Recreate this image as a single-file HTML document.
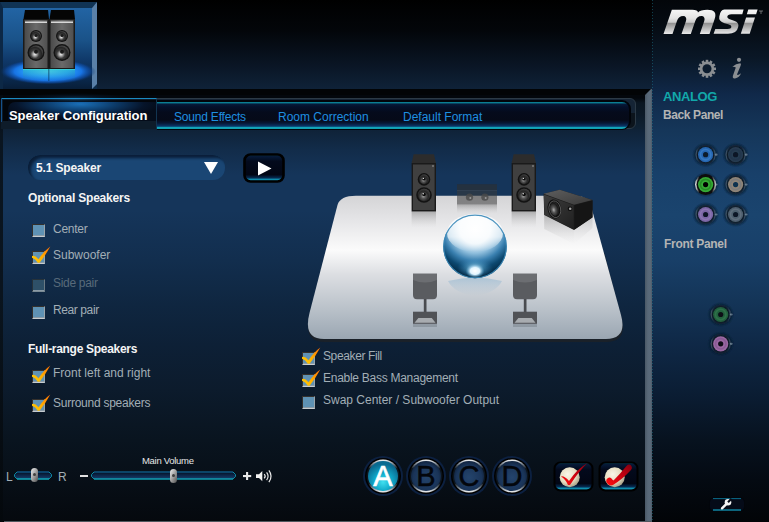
<!DOCTYPE html>
<html><head><meta charset="utf-8">
<style>
*{margin:0;padding:0;box-sizing:border-box}
html,body{width:769px;height:522px;overflow:hidden;background:#000;font-family:"Liberation Sans",sans-serif}
.a{position:absolute}
.t{position:absolute;white-space:nowrap;line-height:1}
#hdr{left:0;top:0;width:652px;height:89px;background:linear-gradient(#000 0%,#03060a 35%,#0a1626 75%,#0f2238 100%)}
#bar{left:0;top:89px;width:651px;height:6px;background:#020406}
#panel{left:3px;top:95px;width:642px;height:426px;background:linear-gradient(#03070c 0px,#03070c 3px,#0a1622 8px,#0c1a28 20px,#0f2234 34px,#0f2238 35px,#122c4a 55px,#15355a 80px,#15355a 115px,#122e4e 165px,#0f2640 210px,#0d2036 250px,#0c1b2c 295px,#09141f 345px,#070e16 390px,#05090e 426px)}
#lstrip{left:0;top:95px;width:3px;height:427px;background:linear-gradient(#050a10,#0a1520 40px,#0a141e 200px,#04080c 427px)}
#rb{left:645px;top:89px;width:7px;height:433px;background:linear-gradient(90deg,#4a5866,#586878 40%,#5a6a7a 75%,#4e5c6a)}
#bl{left:4px;top:521px;width:647px;height:1px;background:#50585f}
#side{left:652px;top:0;width:117px;height:522px;background:linear-gradient(#03060a 0px,#050b12 25px,#0a1828 60px,#10294a 95px,#153659 130px,#18406a 175px,#1a446e 215px,#183f68 260px,#143558 300px,#0f2846 345px,#0b1e35 390px,#07121f 440px,#040a12 480px,#020407 522px)}
#dots{left:652px;top:0;width:1px;height:522px;background:repeating-linear-gradient(rgba(30,130,150,0.45) 0 1px,transparent 1px 3px)}
#tabframe{left:1px;top:98px;width:635px;height:31px;border:1px solid #2c3a46;border-radius:6px;background:linear-gradient(#152435 0,#152435 50%,#0c141c 50%,#0c141c 100%)}
#tabstrip{left:157px;top:100px;width:474px;height:30px;border:2px solid #01040a;border-top-width:2px;border-bottom-width:1.5px;border-left:0;border-radius:0 9px 9px 0;background:linear-gradient(#0c8c9c 0,#0a7088 1px,#061a3a 2px,#04102a 5px,#050b1c 10px,#060a18 18px,#071634 21px,#0a3466 24px,#0c6890 25px,#12a4b8 25.5px,#10a0b4 26.5px,#0a5a80 27px)}
#acttab{left:1px;top:98px;width:156px;height:31px;background:#0e1c2a;border-top:1px solid #1a8ac0;border-left:1px solid #0e1c2a;border-right:1px solid #123450;box-shadow:inset 1px 0 0 #0e1c2a}
#acttop{left:8px;top:102px;width:148px;height:19px;border-radius:7px 0 0 0;background:radial-gradient(ellipse 80px 16px at 72px 2px,#1a70b8 0%,#0c3a68 45%,#06142a 80%,#040c1a 100%)}
#actin{left:3px;top:100px;width:153px;height:21px;border-radius:0;background:#02050a}
.tab{color:#1e8fe0;font-size:12px}
.lbl{color:#a2aeb6;font-size:12px}
.hd{color:#f4f4f4;font-size:12px;font-weight:bold}
.cb{position:absolute;width:13px;height:13px;border-top:1px solid #34302c;border-left:1px solid #34302c;border-right:1px solid #9aa4aa;border-bottom:1px solid #c6ccd0;background:#5f92b4;box-shadow:inset 0 -1px 0 #8a9aa6}
.cb.dis{background:#2e5068;border-color:#26323a #6a7a84 #7a8a94 #26323a}
</style></head><body>
<div class="a" id="hdr"></div>
<div class="a" id="bar"></div>
<div class="a" id="side"></div>
<div class="a" id="dots"></div>
<div class="a" id="lstrip"></div>
<div class="a" id="panel"></div>
<div class="a" id="tabframe"></div>
<div class="a" id="tabstrip"></div>
<div class="a" id="acttab"></div>
<div class="a" id="actin"></div>
<div class="a" id="acttop"></div>
<div class="a" style="left:1px;top:99px;width:1px;height:23px;background:#14508a"></div>
<div class="a" style="left:20px;top:93px;width:110px;height:12px;background:radial-gradient(ellipse 55px 6px at 55px 6px,rgba(40,150,230,0.3) 0%,rgba(20,90,170,0.12) 55%,rgba(10,40,80,0) 100%)"></div>
<div class="a" id="rb"></div>
<div class="a" style="left:645px;top:89px;width:0;height:0;border-top:6px solid #020406;border-right:6px solid transparent"></div>
<div class="a" id="bl"></div>

<!-- tabs text -->
<div class="t hd" style="left:9px;top:109px;font-size:13px;color:#fff;letter-spacing:-0.05px">Speaker Configuration</div>
<div class="t tab" style="left:174px;top:111px;letter-spacing:-0.2px">Sound Effects</div>
<div class="t tab" style="left:278px;top:111px">Room Correction</div>
<div class="t tab" style="left:403px;top:111px">Default Format</div>

<!-- dropdown -->
<div class="a" style="left:28px;top:155px;width:197px;height:25px;border-radius:12px;background:#1a4674;box-shadow:inset 3px 3px 3px #0a1e38"></div>
<div class="t hd" style="left:36px;top:162px;letter-spacing:-0.15px">5.1 Speaker</div>







<div class="t hd" style="left:28px;top:192px;letter-spacing:-0.2px">Optional Speakers</div>
<div class="cb" style="left:32px;top:224px"></div>
<div class="t lbl" style="left:53px;top:223px;letter-spacing:-0.25px">Center</div>
<div class="cb" style="left:32px;top:251px"></div>
<div class="t lbl" style="left:53px;top:249px">Subwoofer</div>
<div class="cb dis" style="left:32px;top:279px"></div>
<div class="t lbl" style="left:53px;top:277px;color:#586a7a;letter-spacing:-0.3px">Side pair</div>
<div class="cb" style="left:32px;top:306px"></div>
<div class="t lbl" style="left:53px;top:304px;letter-spacing:-0.4px">Rear pair</div>

<div class="t hd" style="left:28px;top:343px;letter-spacing:-0.3px">Full-range Speakers</div>
<div class="cb" style="left:32px;top:370px"></div>
<div class="t lbl" style="left:53px;top:367px">Front left and right</div>
<div class="cb" style="left:32px;top:399px"></div>
<div class="t lbl" style="left:53px;top:397px;letter-spacing:-0.25px">Surround speakers</div>

<div class="cb" style="left:302px;top:352px"></div>
<div class="t lbl" style="left:323px;top:350px;letter-spacing:-0.38px">Speaker Fill</div>
<div class="cb" style="left:302px;top:374px"></div>
<div class="t lbl" style="left:323px;top:372px;letter-spacing:-0.27px">Enable Bass Management</div>
<div class="cb" style="left:302px;top:396px"></div>
<div class="t lbl" style="left:323px;top:394px">Swap Center / Subwoofer Output</div>

<!-- bottom -->
<div class="t lbl" style="left:6px;top:471px;font-size:12px">L</div>
<div class="t lbl" style="left:58px;top:471px;font-size:12px">R</div>
<div class="t" style="left:142px;top:456px;font-size:9.5px;color:#e6e6e6;letter-spacing:-0.3px">Main Volume</div>

<!-- sidebar text -->
<div class="t" style="left:663px;top:90px;font-size:13px;font-weight:bold;color:#12a8aa;letter-spacing:-0.4px">ANALOG</div>
<div class="t" style="left:663px;top:109px;font-size:12px;font-weight:bold;color:#b4b4b4;letter-spacing:-0.4px">Back Panel</div>
<div class="t" style="left:664px;top:238px;font-size:12px;font-weight:bold;color:#b4b4b4;letter-spacing:-0.3px">Front Panel</div>
<svg class="a" style="left:0;top:0" width="769" height="522" viewBox="0 0 769 522">
<defs>
 <linearGradient id="tileg" x1="0" y1="0" x2="0" y2="1">
  <stop offset="0" stop-color="#2264a4"/><stop offset="0.4" stop-color="#1a5288"/><stop offset="0.65" stop-color="#0f3868"/><stop offset="0.85" stop-color="#0a2a50"/><stop offset="1" stop-color="#081e38"/>
 </linearGradient>
 <radialGradient id="glow" cx="0.5" cy="0.5" r="0.5">
  <stop offset="0" stop-color="#50d0ff"/><stop offset="0.4" stop-color="#2aa4ff"/><stop offset="0.7" stop-color="#1874e4"/><stop offset="0.88" stop-color="#0e4aa0" stop-opacity="0.65"/><stop offset="1" stop-color="#0a3060" stop-opacity="0"/>
 </radialGradient>
 <linearGradient id="spkb" x1="0" y1="0" x2="1" y2="0">
  <stop offset="0" stop-color="#4a4a4a"/><stop offset="0.5" stop-color="#6a6a6a"/><stop offset="1" stop-color="#505050"/>
 </linearGradient>
 <radialGradient id="drv" cx="0.45" cy="0.6" r="0.6">
  <stop offset="0" stop-color="#f0f0f0"/><stop offset="0.25" stop-color="#808080"/><stop offset="0.55" stop-color="#202020"/><stop offset="0.8" stop-color="#3a3a3a"/><stop offset="1" stop-color="#111"/>
 </radialGradient>
 <linearGradient id="floorg" x1="0" y1="0" x2="0" y2="1">
  <stop offset="0" stop-color="#d4d4d6"/><stop offset="0.18" stop-color="#e6e6e8"/><stop offset="0.38" stop-color="#fbfbfb"/><stop offset="0.55" stop-color="#dcdee2"/><stop offset="0.8" stop-color="#b8c0c8"/><stop offset="1" stop-color="#9aa6b2"/>
 </linearGradient>
 <radialGradient id="sph" cx="0.5" cy="0.22" r="0.8">
  <stop offset="0" stop-color="#ffffff"/><stop offset="0.3" stop-color="#eaf4fa"/><stop offset="0.48" stop-color="#92c0de"/><stop offset="0.63" stop-color="#3a80b0"/><stop offset="0.78" stop-color="#0c4870"/><stop offset="0.9" stop-color="#05304e"/><stop offset="1" stop-color="#021828"/>
 </radialGradient>
 <radialGradient id="sphglow" cx="0.5" cy="0.5" r="0.5">
  <stop offset="0" stop-color="#e8f8ff" stop-opacity="0.9"/><stop offset="0.5" stop-color="#6ab8e0" stop-opacity="0.4"/><stop offset="1" stop-color="#3a88c0" stop-opacity="0"/>
 </radialGradient>
 <radialGradient id="sphspot" cx="0.5" cy="0.5" r="0.5">
  <stop offset="0" stop-color="#fff"/><stop offset="0.5" stop-color="#e0f4ff"/><stop offset="1" stop-color="#4aa0d0" stop-opacity="0"/>
 </radialGradient>
 <linearGradient id="chk" x1="0" y1="1" x2="1" y2="0">
  <stop offset="0" stop-color="#ffd000"/><stop offset="0.5" stop-color="#ffa800"/><stop offset="1" stop-color="#ff6a00"/>
 </linearGradient>
 <linearGradient id="playg" x1="0" y1="0" x2="0" y2="1">
  <stop offset="0" stop-color="#0a7090"/><stop offset="0.07" stop-color="#061a38"/><stop offset="0.25" stop-color="#030a1c"/><stop offset="0.75" stop-color="#020614"/><stop offset="0.86" stop-color="#06284e"/><stop offset="0.94" stop-color="#10a0c0"/><stop offset="1" stop-color="#0a4a70"/>
 </linearGradient>
 <linearGradient id="trk" x1="0" y1="0" x2="0" y2="1">
  <stop offset="0" stop-color="#050e1e"/><stop offset="0.35" stop-color="#0a2040"/><stop offset="1" stop-color="#173e6c"/>
 </linearGradient>
 <linearGradient id="thumb" x1="0" y1="0" x2="1" y2="1">
  <stop offset="0" stop-color="#f0f0f0"/><stop offset="0.5" stop-color="#a0a0a0"/><stop offset="1" stop-color="#505050"/>
 </linearGradient>
 <radialGradient id="btnA" cx="0.5" cy="0.7" r="0.6">
  <stop offset="0" stop-color="#40e0f0"/><stop offset="0.5" stop-color="#10a8c8"/><stop offset="1" stop-color="#0a6a90"/>
 </radialGradient>
 <radialGradient id="btnB" cx="0.5" cy="0.55" r="0.6">
  <stop offset="0" stop-color="#24446c"/><stop offset="0.7" stop-color="#1a3458"/><stop offset="1" stop-color="#0c1c34"/>
 </radialGradient>
 <linearGradient id="rim" x1="0" y1="0" x2="0" y2="1">
  <stop offset="0" stop-color="#ffffff"/><stop offset="0.1" stop-color="#9aa4ae"/><stop offset="0.28" stop-color="#0c141c"/><stop offset="0.72" stop-color="#0c141c"/><stop offset="0.9" stop-color="#9aa4ae"/><stop offset="1" stop-color="#ffffff"/>
 </linearGradient>
 <radialGradient id="cream" cx="0.4" cy="0.35" r="0.7">
  <stop offset="0" stop-color="#faf6e8"/><stop offset="0.6" stop-color="#e4dcc0"/><stop offset="1" stop-color="#a09880"/>
 </radialGradient>
 <linearGradient id="redg" x1="0" y1="1" x2="1" y2="0">
  <stop offset="0" stop-color="#ff1010"/><stop offset="0.6" stop-color="#c00010"/><stop offset="1" stop-color="#800010"/>
 </linearGradient>
 <linearGradient id="msig" gradientUnits="userSpaceOnUse" x1="0" x2="0" y1="9.6" y2="33.8">
  <stop offset="0" stop-color="#f6f6f6"/><stop offset="0.35" stop-color="#e4e4e4"/><stop offset="0.53" stop-color="#cacaca"/><stop offset="0.545" stop-color="#8c8c8c"/><stop offset="0.75" stop-color="#b4b4b4"/><stop offset="1" stop-color="#e8e8e8"/>
 </linearGradient>
</defs>
<!-- tile -->
<defs>
 <radialGradient id="cone" cx="0.42" cy="0.62" r="0.6">
  <stop offset="0" stop-color="#f4f4f4"/><stop offset="0.22" stop-color="#a8a8a8"/><stop offset="0.5" stop-color="#3c3c3c"/><stop offset="0.8" stop-color="#262626"/><stop offset="1" stop-color="#4a4a4a"/>
 </radialGradient>
 <radialGradient id="cone2" cx="0.45" cy="0.6" r="0.62">
  <stop offset="0" stop-color="#a8a8a8"/><stop offset="0.28" stop-color="#5a5a5a"/><stop offset="0.65" stop-color="#262626"/><stop offset="0.9" stop-color="#3a3a3a"/><stop offset="1" stop-color="#555"/>
 </radialGradient>
 <linearGradient id="refl" x1="0" y1="0" x2="0" y2="1">
  <stop offset="0" stop-color="#40f0e0" stop-opacity="0.95"/><stop offset="0.1" stop-color="#30c0c0" stop-opacity="0.5"/><stop offset="0.5" stop-color="#2a9ab0" stop-opacity="0.3"/><stop offset="1" stop-color="#1060a0" stop-opacity="0"/>
 </linearGradient>
 <linearGradient id="sphhi" x1="0" y1="0" x2="0" y2="1">
  <stop offset="0" stop-color="#fff" stop-opacity="0.95"/><stop offset="0.6" stop-color="#fff" stop-opacity="0.8"/><stop offset="1" stop-color="#fff" stop-opacity="0"/>
 </linearGradient>
 <linearGradient id="spkrefl" x1="0" y1="0" x2="0" y2="1">
  <stop offset="0" stop-color="#707070" stop-opacity="0.45"/><stop offset="1" stop-color="#c0c0c0" stop-opacity="0"/>
 </linearGradient>
</defs>
<rect x="0" y="2" width="97" height="87" fill="#0c2a48"/>
<rect x="3" y="8" width="89" height="81" fill="url(#tileg)"/>
<polygon points="0,2 97,2 92,8 3,8" fill="#103354"/>
<polygon points="0,2 3,8 3,89 0,89" fill="#0c2846"/>
<polygon points="92,8 97,2 97,84 92,89" fill="#5a80a8"/>
<ellipse cx="48" cy="71.5" rx="48" ry="13" fill="url(#glow)"/>
<rect x="23" y="69" width="52" height="12" fill="url(#refl)"/>
<rect x="48" y="69" width="1.5" height="12" fill="#0a3a60" opacity="0.5"/>
<g id="tspk">
 <polygon points="23.5,19 25,10 48,10 49,19" fill="#050505"/>
 <rect x="23" y="19" width="26" height="50" fill="#1a1a1a"/>
 <rect x="24.5" y="20" width="23" height="48" fill="url(#spkb)"/>
 <rect x="25" y="21.5" width="22" height="1.5" fill="#d8d8d8"/>
 <circle cx="36" cy="36" r="6" fill="#141414"/>
 <circle cx="36" cy="36" r="4.8" fill="url(#cone)"/>
 <circle cx="36" cy="35.5" r="1.6" fill="#1a1a1a"/>
 <circle cx="36" cy="52.5" r="8.5" fill="#141414"/>
 <circle cx="36" cy="52.5" r="7" fill="url(#cone)"/>
 <circle cx="36" cy="51.8" r="2" fill="#1a1a1a"/>
</g>
<use href="#tspk" x="26"/>

<!-- dropdown triangle & play -->
<polygon points="204,162 218,162 211,174" fill="#fff"/>
<rect x="244.5" y="154.5" width="39" height="27" rx="6" fill="url(#playg)" stroke="#000" stroke-width="2.6"/>
<polygon points="258,161.5 271.5,168.5 258,175.5" fill="#fff"/>

<!-- floor -->
<path transform="translate(0.3,3)" d="M356,250 L604,250 L621,315 Q627.5,339 606,339 L324,339 Q302.8,339 309.5,313 L325,250 Z" fill="#1a2129"/>
<path d="M356,195.7 L576,195.7 Q588.1,195.7 591,206 L621,315 Q627.5,339 606,339 L324,339 Q302.8,339 309.5,313 L337.5,205 Q340.1,195.7 356,195.7 Z" fill="url(#floorg)"/>
<!-- front speakers -->
<g id="fspk">
 <rect x="411.6" y="211.5" width="24.4" height="16" fill="url(#spkrefl)"/>
 <polygon points="411.6,163 413.6,154.3 434,154.3 436,163" fill="#2c2c2c"/>
 <rect x="411.6" y="163" width="24.4" height="48.5" fill="#1a1a1a"/>
 <rect x="413" y="164.5" width="21.6" height="45.5" fill="#404040"/>
 <circle cx="433" cy="166" r="0.7" fill="#bbb"/>
 <circle cx="424" cy="179.4" r="6.3" fill="#121212"/>
 <circle cx="424" cy="179.4" r="4.8" fill="url(#cone2)"/>
 <circle cx="424" cy="179" r="1.6" fill="#0a0a0a"/>
 <circle cx="423.4" cy="178.4" r="0.7" fill="#ddd"/>
 <circle cx="424" cy="195" r="7.8" fill="#121212"/>
 <circle cx="424" cy="195" r="6.2" fill="url(#cone2)"/>
 <circle cx="424" cy="194.5" r="1.8" fill="#0a0a0a"/>
 <circle cx="423.2" cy="193.8" r="0.8" fill="#ddd"/>
</g>
<use href="#fspk" x="100"/>
<!-- center -->
<rect x="457" y="204.5" width="40" height="9" fill="url(#spkrefl)"/>
<rect x="457" y="184.2" width="40" height="20.3" fill="#3a3a3a" opacity="0.55"/>
<rect x="457" y="184.2" width="40" height="5.8" fill="#000" opacity="0.12"/>
<rect x="457" y="190" width="40" height="0.8" fill="#4a5a6a" opacity="0.35"/>
<circle cx="469.5" cy="197.2" r="3.6" fill="#4a4a4a" opacity="0.8"/><circle cx="484.9" cy="197.2" r="3.6" fill="#4a4a4a" opacity="0.8"/>
<circle cx="470.3" cy="198" r="1" fill="#aaa" opacity="0.8"/><circle cx="485.7" cy="198" r="1" fill="#aaa" opacity="0.8"/>
<!-- subwoofer -->
<defs>
 <linearGradient id="subrefl" x1="0" y1="0" x2="0" y2="1"><stop offset="0" stop-color="#8a8a8a" stop-opacity="0.5"/><stop offset="1" stop-color="#d0d0d0" stop-opacity="0"/></linearGradient>
 <linearGradient id="subtop" x1="0" y1="0" x2="1" y2="1"><stop offset="0" stop-color="#5e5e5e"/><stop offset="1" stop-color="#3a3a3a"/></linearGradient>
 <linearGradient id="subfr" x1="0" y1="0" x2="1" y2="1"><stop offset="0" stop-color="#3e3e3e"/><stop offset="1" stop-color="#202020"/></linearGradient>
 <radialGradient id="wcone" cx="0.4" cy="0.55" r="0.6"><stop offset="0" stop-color="#b0b0b0"/><stop offset="0.35" stop-color="#555"/><stop offset="0.8" stop-color="#1a1a1a"/><stop offset="1" stop-color="#2a2a2a"/></radialGradient>
</defs>
<polygon points="544.2,215 574,230 574,244 544.2,229" fill="url(#subrefl)"/>
<polygon points="574,230 592.5,217.4 592.5,228 574,244" fill="url(#subrefl)" opacity="0.6"/>
<polygon points="543.6,193.8 559.7,189.8 592.5,200.1 592.5,217.4 574,230 544.2,215" fill="#1c1c1c"/>
<polygon points="543.6,193.8 559.7,189.8 592.5,200.1 574,204.7" fill="url(#subtop)"/>
<polygon points="543.8,194.6 573.6,205.3 573.6,229.2 544.4,214.6" fill="url(#subfr)"/>
<polygon points="574.4,205.3 592.5,200.6 592.5,217.2 574.4,229.4" fill="#151515"/>
<ellipse cx="554.5" cy="209" rx="6.8" ry="9.6" fill="#0e0e0e" transform="rotate(-12 554.5 209)"/>
<ellipse cx="554.8" cy="209.3" rx="5.8" ry="8.4" fill="none" stroke="#8a8a8a" stroke-width="0.8" opacity="0.7" transform="rotate(-12 554.5 209)"/>
<ellipse cx="554.5" cy="209" rx="4.6" ry="7" fill="url(#wcone)" transform="rotate(-12 554.5 209)"/>
<circle cx="570" cy="208.7" r="2.3" fill="#0c0c0c"/><circle cx="570.2" cy="208.8" r="1.3" fill="#a0a0a0"/>
<!-- sphere -->
<defs><linearGradient id="sphrefl" x1="0" y1="0" x2="0" y2="1"><stop offset="0" stop-color="#4a90c0" stop-opacity="0.45"/><stop offset="1" stop-color="#8ab8d8" stop-opacity="0"/></linearGradient></defs>
<path d="M448,281 Q475,274 502,281 Q496,293 475,296 Q454,293 448,281 Z" fill="url(#sphrefl)" opacity="0.7"/>
<circle cx="475" cy="246.4" r="31.8" fill="url(#sph)"/>
<ellipse cx="475" cy="233" rx="28" ry="19" fill="url(#sphhi)" opacity="0.9"/>
<circle cx="475" cy="246.4" r="31.3" fill="none" stroke="#3a88b8" stroke-width="1.1" opacity="0.9"/>
<ellipse cx="475" cy="268" rx="18" ry="10" fill="url(#sphglow)"/>
<ellipse cx="475" cy="271" rx="9.5" ry="7" fill="url(#sphspot)"/>
<!-- rear speakers -->
<g id="rspk">
 <rect x="413" y="324" width="24" height="3" fill="#606a74" opacity="0.35"/>
 <path d="M413,273.7 L437,273.7 L437,295 Q437,299.2 433,299.2 L417,299.2 Q413,299.2 413,295 Z" fill="#5a5c60"/>
 <path d="M413,273.7 L437,273.7 L437,280 Q425,285 413,280 Z" fill="#6c6e72"/>
 <rect x="423.8" y="299" width="2.7" height="13" fill="#4a4c50"/>
 <rect x="413" y="311.7" width="24" height="12.1" fill="#505256"/>
 <polygon points="418.4,318 431.8,318 435.5,322.8 414.5,322.8" fill="#a8acb0"/>
</g>
<use href="#rspk" x="100"/>
<!-- checkmarks -->
<g id="ck"><path d="M32,256 Q35,255 38.5,259.2 Q44,251 50.3,246.5 Q46,254.5 39.6,262.8 L37.8,262.8 Q35.5,259 32,257.8 Z" fill="url(#chk)"/></g>
<use href="#ck" y="119"/>
<use href="#ck" y="148"/>
<use href="#ck" x="270" y="101"/>
<use href="#ck" x="270" y="123"/>

<!-- LR slider -->
<polygon points="17.0,472 49.0,472 51.5,474.5 51.5,476.5 49.0,479 17.0,479 14.5,476.5 14.5,474.5" fill="url(#trk)" stroke="#0c8ca4" stroke-width="1"/>
<path d="M17.0,472 L49.0,472" stroke="#0e3a6e" stroke-width="1.2"/>
<path d="M17.0,479 L49.0,479" stroke="#12a8b8" stroke-width="1.2"/>
<rect x="31" y="468" width="7" height="14" rx="3.5" fill="url(#thumb)"/>
<circle cx="34.5" cy="474.5" r="1.5" fill="#404040"/>
<!-- minus / volume -->
<rect x="80" y="475" width="8" height="2" fill="#e0e0e0"/>
<polygon points="94.0,472 233.0,472 235.5,474.5 235.5,476.5 233.0,479 94.0,479 91.5,476.5 91.5,474.5" fill="url(#trk)" stroke="#0c8ca4" stroke-width="1"/>
<path d="M94.0,472 L233.0,472" stroke="#0e3a6e" stroke-width="1.2"/>
<path d="M94.0,479 L233.0,479" stroke="#12a8b8" stroke-width="1.2"/>
<rect x="170" y="469" width="7" height="14" rx="3.5" fill="url(#thumb)"/>
<circle cx="173.5" cy="475.5" r="1.5" fill="#404040"/>
<rect x="243" y="475" width="8.2" height="2.1" fill="#e8e8e8"/>
<rect x="246.05" y="472" width="2.1" height="8" fill="#e8e8e8"/>
<polygon points="256,474.3 259,474.3 262.3,471 262.3,481.2 259,478 256,478" fill="#f2f2f2"/>
<path d="M264.2,474.2 Q266.2,476.2 264.2,478.3" stroke="#e8e8e8" stroke-width="1.2" fill="none"/>
<path d="M266.6,472.4 Q269.6,476.2 266.6,480.1" stroke="#e8e8e8" stroke-width="1.2" fill="none"/>
<path d="M268.9,470.4 Q273.2,476.2 268.9,482.2" stroke="#e8e8e8" stroke-width="1.2" fill="none"/>

<!-- ABCD -->
<g>
 <circle cx="383" cy="476" r="20" fill="#0c2040"/>
 <circle cx="383" cy="476" r="18" fill="#000"/>
 <circle cx="383" cy="476" r="16.5" fill="url(#rim)"/>
 <circle cx="383" cy="476" r="15" fill="url(#btnA)"/>
</g>
<g id="bb">
 <circle cx="426" cy="476" r="20" fill="#0c2040"/>
 <circle cx="426" cy="476" r="18" fill="#000"/>
 <circle cx="426" cy="476" r="16.5" fill="url(#rim)"/>
 <circle cx="426" cy="476" r="15" fill="url(#btnB)"/>
</g>
<use href="#bb" x="43"/>
<use href="#bb" x="86"/>
<text x="383" y="486" text-anchor="middle" font-family="Liberation Sans" font-size="29" fill="#fff" stroke="#fff" stroke-width="0.6">A</text>
<text x="426" y="486" text-anchor="middle" font-family="Liberation Sans" font-size="29" fill="#03060c" stroke="#03060c" stroke-width="0.5">B</text>
<text x="469" y="486" text-anchor="middle" font-family="Liberation Sans" font-size="29" fill="#03060c" stroke="#03060c" stroke-width="0.5">C</text>
<text x="512" y="486" text-anchor="middle" font-family="Liberation Sans" font-size="29" fill="#03060c" stroke="#03060c" stroke-width="0.5">D</text>

<!-- check buttons -->
<g id="cbtn">
 <rect x="554.5" y="462.5" width="38" height="28" rx="6" fill="url(#playg)" stroke="#000" stroke-width="2"/>
 <circle cx="569.7" cy="477.3" r="10" fill="url(#cream)"/>
</g>
<use href="#cbtn" x="45"/>
<path d="M561,476.5 Q564,475.5 569,481 Q577,469 587.5,463 Q579,471 570,485 L568,485 Q565.5,479 561,476.5 Z" fill="url(#redg)"/>
<path d="M606.5,479.5 Q609,476 611.5,478.5 Q612.5,480 613.5,480.5 Q620,474 626.5,466 Q629,463.5 631,465.5 Q633,468 630.5,470.5 Q622,479.5 613,485 Q609,486.5 607,483 Q605.5,481 606.5,479.5 Z" fill="url(#redg)"/>

<!-- msi logo -->
<g fill="url(#msig)">
 <path transform="translate(0,34) skewX(-19) translate(0,-34)" d="M663.5,34 L663.5,9.8 L684,9.8 Q689.5,9.8 690.6,12.6 Q692,9.8 699,9.8 Q709.5,9.8 709.5,19 L709.5,34 L699.8,34 L699.8,21 A4.5,5 0 0 0 690.8,21 L690.8,34 L681.5,34 L681.5,21 A4.5,5 0 0 0 672.5,21 L672.5,34 Z"/>
 <path d="M724.3,9.6 L743.6,9.6 L742.3,14.3 L731.5,14.3 Q727.5,14.3 727.3,16.8 Q727.2,18.6 730.5,19.6 L734,20.8 Q739.5,22.5 738.2,27 Q736.8,33.8 728,33.8 L713.6,33.8 L715.3,29 L727.5,29 Q731.2,29 731.4,26.8 Q731.5,25.2 728.2,24.3 L724.5,23.2 Q718.3,21.3 719.3,16.5 Q720.5,9.6 724.3,9.6 Z"/>
 <path d="M746.1,17.5 L755,17.5 L749.7,33.8 L740.8,33.8 Z"/>
 <path d="M748.3,9.6 L757.6,9.6 L756.1,14.3 L746.8,14.3 Z"/>
</g>
<path d="M759,11 L763,11 M761,11 L761,14" stroke="#9a9a9a" stroke-width="0.7"/>

<!-- gear -->
<g transform="translate(707,68.8)" fill="#8a8e92">
 <circle r="7.2"/>
 <g id="tooth"><rect x="-1.3" y="-9" width="2.6" height="3"/></g>
 <use href="#tooth" transform="rotate(30)"/><use href="#tooth" transform="rotate(60)"/><use href="#tooth" transform="rotate(90)"/>
 <use href="#tooth" transform="rotate(120)"/><use href="#tooth" transform="rotate(150)"/><use href="#tooth" transform="rotate(180)"/>
 <use href="#tooth" transform="rotate(210)"/><use href="#tooth" transform="rotate(240)"/><use href="#tooth" transform="rotate(270)"/>
 <use href="#tooth" transform="rotate(300)"/><use href="#tooth" transform="rotate(330)"/>
 <circle r="4.5" fill="#0c1c2e"/>
</g>
<!-- i -->
<circle cx="739" cy="59.8" r="2.1" fill="#8a8e92"/>
<path d="M732.3,66.8 Q736,63.6 740.2,63.2 Q741.6,63.5 740.6,65.8 L737,74.6 Q738,75.6 741,73.2 Q739.5,77.6 735,78.4 Q732.2,78.8 732.9,75.8 L735.8,67.6 Q734.6,66.6 732.3,66.8 Z" fill="#8a8e92"/>
<!-- jacks -->
<defs><radialGradient id="jk" cx="0.5" cy="0.5" r="0.5"><stop offset="0" stop-color="#06101c" stop-opacity="0.95"/><stop offset="0.6" stop-color="#08141f" stop-opacity="0.9"/><stop offset="0.8" stop-color="#0a1a2c" stop-opacity="0.55"/><stop offset="1" stop-color="#0a1a2c" stop-opacity="0"/></radialGradient>
<linearGradient id="jrim" x1="0" y1="0" x2="1" y2="0"><stop offset="0" stop-color="#8aa0b0"/><stop offset="0.2" stop-color="#1a2a3a" stop-opacity="0.3"/><stop offset="0.8" stop-color="#1a2a3a" stop-opacity="0.3"/><stop offset="1" stop-color="#8aa0b0"/></linearGradient>
<linearGradient id="jrimA" x1="0" y1="0" x2="1" y2="0"><stop offset="0" stop-color="#ffffff"/><stop offset="0.2" stop-color="#101010"/><stop offset="0.8" stop-color="#101010"/><stop offset="1" stop-color="#e0e0e0"/></linearGradient><filter id="jblur" x="-20%" y="-20%" width="140%" height="140%"><feGaussianBlur stdDeviation="0.45"/></filter></defs>
<g filter="url(#jblur)">
<ellipse cx="705.6" cy="154.7" rx="13.5" ry="12.5" fill="url(#jk)"/>
<circle cx="705.6" cy="154.7" r="9.5" fill="none" stroke="url(#jrim)" stroke-width="1.2" opacity="0.4"/>
<circle cx="705.6" cy="154.7" r="7.6" fill="#2866b0"/>
<circle cx="705.6" cy="154.7" r="5.2" fill="none" stroke="#3478c0" stroke-width="1.6"/>
<circle cx="705.6" cy="154.7" r="2.6" fill="#0a1a2a"/>
<ellipse cx="716.1" cy="154.7" rx="1.5" ry="1.1" fill="#9ab0c0" opacity="0.55"/>
<ellipse cx="735.6" cy="154.7" rx="13.5" ry="12.5" fill="url(#jk)"/>
<circle cx="735.6" cy="154.7" r="9.5" fill="none" stroke="url(#jrim)" stroke-width="1.2" opacity="0.4"/>
<circle cx="735.6" cy="154.7" r="7.6" fill="#263a50"/>
<circle cx="735.6" cy="154.7" r="5.2" fill="none" stroke="#22364c" stroke-width="1.6"/>
<circle cx="735.6" cy="154.7" r="2.6" fill="#0a1826"/>
<ellipse cx="746.1" cy="154.7" rx="1.5" ry="1.1" fill="#9ab0c0" opacity="0.55"/>
<ellipse cx="705.6" cy="184.6" rx="13.5" ry="12.5" fill="url(#jk)"/>
<circle cx="705.6" cy="184.6" r="10.5" fill="url(#jrimA)"/>
<circle cx="705.6" cy="184.6" r="9" fill="#0a0a0a"/>
<circle cx="705.6" cy="184.6" r="7.6" fill="#36aa36"/>
<circle cx="705.6" cy="184.6" r="5.2" fill="none" stroke="#268a26" stroke-width="1.6"/>
<circle cx="705.6" cy="184.6" r="2.6" fill="#000000"/>
<ellipse cx="716.1" cy="184.6" rx="1.5" ry="1.1" fill="#9ab0c0" opacity="0.55"/>
<ellipse cx="735.6" cy="184.6" rx="13.5" ry="12.5" fill="url(#jk)"/>
<circle cx="735.6" cy="184.6" r="9.5" fill="none" stroke="url(#jrim)" stroke-width="1.2" opacity="0.4"/>
<circle cx="735.6" cy="184.6" r="7.6" fill="#8e8478"/>
<circle cx="735.6" cy="184.6" r="5.2" fill="none" stroke="#7c7c7c" stroke-width="1.6"/>
<circle cx="735.6" cy="184.6" r="2.6" fill="#0a3050"/>
<ellipse cx="746.1" cy="184.6" rx="1.5" ry="1.1" fill="#9ab0c0" opacity="0.55"/>
<ellipse cx="705.6" cy="214.5" rx="13.5" ry="12.5" fill="url(#jk)"/>
<circle cx="705.6" cy="214.5" r="9.5" fill="none" stroke="url(#jrim)" stroke-width="1.2" opacity="0.4"/>
<circle cx="705.6" cy="214.5" r="7.6" fill="#7a66a4"/>
<circle cx="705.6" cy="214.5" r="5.2" fill="none" stroke="#8a74b0" stroke-width="1.6"/>
<circle cx="705.6" cy="214.5" r="2.6" fill="#101828"/>
<ellipse cx="716.1" cy="214.5" rx="1.5" ry="1.1" fill="#9ab0c0" opacity="0.55"/>
<ellipse cx="735.6" cy="214.5" rx="13.5" ry="12.5" fill="url(#jk)"/>
<circle cx="735.6" cy="214.5" r="9.5" fill="none" stroke="url(#jrim)" stroke-width="1.2" opacity="0.4"/>
<circle cx="735.6" cy="214.5" r="7.6" fill="#4e5e6e"/>
<circle cx="735.6" cy="214.5" r="5.2" fill="none" stroke="#5e6e7c" stroke-width="1.6"/>
<circle cx="735.6" cy="214.5" r="2.6" fill="#0a1826"/>
<ellipse cx="746.1" cy="214.5" rx="1.5" ry="1.1" fill="#9ab0c0" opacity="0.55"/>
<ellipse cx="720.7" cy="314.5" rx="13.5" ry="12.5" fill="url(#jk)"/>
<circle cx="720.7" cy="314.5" r="9.5" fill="none" stroke="url(#jrim)" stroke-width="1.2" opacity="0.4"/>
<circle cx="720.7" cy="314.5" r="7.6" fill="#24603e"/>
<circle cx="720.7" cy="314.5" r="5.2" fill="none" stroke="#2e7048" stroke-width="1.6"/>
<circle cx="720.7" cy="314.5" r="2.6" fill="#0a1018"/>
<ellipse cx="731.2" cy="314.5" rx="1.5" ry="1.1" fill="#9ab0c0" opacity="0.55"/>
<ellipse cx="720.7" cy="343.8" rx="13.5" ry="12.5" fill="url(#jk)"/>
<circle cx="720.7" cy="343.8" r="9.5" fill="none" stroke="url(#jrim)" stroke-width="1.2" opacity="0.4"/>
<circle cx="720.7" cy="343.8" r="7.6" fill="#9a68a2"/>
<circle cx="720.7" cy="343.8" r="5.2" fill="none" stroke="#8a5a94" stroke-width="1.6"/>
<circle cx="720.7" cy="343.8" r="2.6" fill="#100c18"/>
<ellipse cx="731.2" cy="343.8" rx="1.5" ry="1.1" fill="#9ab0c0" opacity="0.55"/>
</g>
<!-- wrench button -->
<rect x="709.5" y="497.5" width="35" height="14" rx="5" fill="#050b18" stroke="#02050a" stroke-width="1"/>
<path d="M713,498.6 L741,498.6" stroke="#0a6a88" stroke-width="1"/>
<path d="M713,510 L741,510" stroke="#12a0c0" stroke-width="1.2"/>
<path d="M722,508.3 L727,503.3" stroke="#f4f4f4" stroke-width="2.4" stroke-linecap="round"/>
<circle cx="728" cy="502.3" r="3.3" fill="#f4f4f4"/>
<path d="M728,502.3 L731.5,498.8" stroke="#050b18" stroke-width="2.2"/>
</svg>
































</body></html>
